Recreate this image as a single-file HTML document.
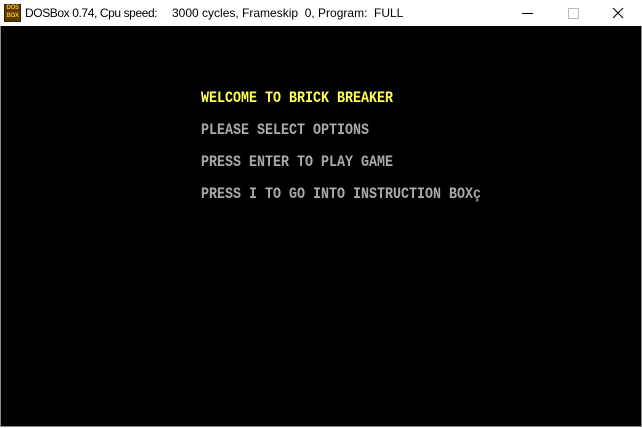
<!DOCTYPE html>
<html><head><meta charset="utf-8"><style>
html,body{margin:0;padding:0;width:642px;height:428px;overflow:hidden;background:#fff;}
.win{position:absolute;left:0;top:0;width:640px;height:426px;border:1px solid #8a8a8a;border-top:none;background:#fff;}
.title{position:absolute;left:0;top:0;width:642px;height:26px;background:#fff;}
.logo{position:absolute;left:4px;top:4px;width:15px;height:16px;background:#5a3a08;border:1px solid #3a2504;}
.logo span{display:block;font:bold 6px/7.5px "Liberation Sans",sans-serif;color:#f0c020;text-align:center;letter-spacing:-0.3px;}
.t{position:absolute;top:5px;font:12px/16px "Liberation Sans",sans-serif;color:#000;white-space:pre;}
.screen{position:absolute;left:1px;top:26px;width:640px;height:400px;background:#000;}
.l{position:absolute;left:201px;font:bold 13.33px/16px "Liberation Mono",monospace;white-space:pre;color:#aaaaaa;transform-origin:0 11.5px;transform:scaleY(1.15);}
.y{color:#ffff55;}
.ctl{position:absolute;}
</style></head><body>
<div class="win"></div>
<div class="title">
  <div class="logo"><span>DOS</span><span>BOX</span></div>
  <div class="t" style="left:25px;letter-spacing:-0.4px">DOSBox 0.74, Cpu speed:</div>
  <div class="t" style="left:172px">3000 cycles, Frameskip&nbsp; 0, Program:</div>
  <div class="t" style="left:374px">FULL</div>
  <div class="ctl" style="left:522px;top:13px;width:11px;height:1px;background:#000"></div>
  <div class="ctl" style="left:568px;top:8px;width:9px;height:9px;border:1px solid #bbb"></div>
  <svg class="ctl" style="left:612px;top:7px" width="12" height="12"><path d="M1 1L11 11M11 1L1 11" stroke="#000" stroke-width="1"/></svg>
</div>
<div class="screen"></div>
<div class="l y" style="top:92px">WELCOME TO BRICK BREAKER</div>
<div class="l" style="top:124px">PLEASE SELECT OPTIONS</div>
<div class="l" style="top:156px">PRESS ENTER TO PLAY GAME</div>
<div class="l" style="top:188px">PRESS I TO GO INTO INSTRUCTION BOXç</div>
</body></html>
